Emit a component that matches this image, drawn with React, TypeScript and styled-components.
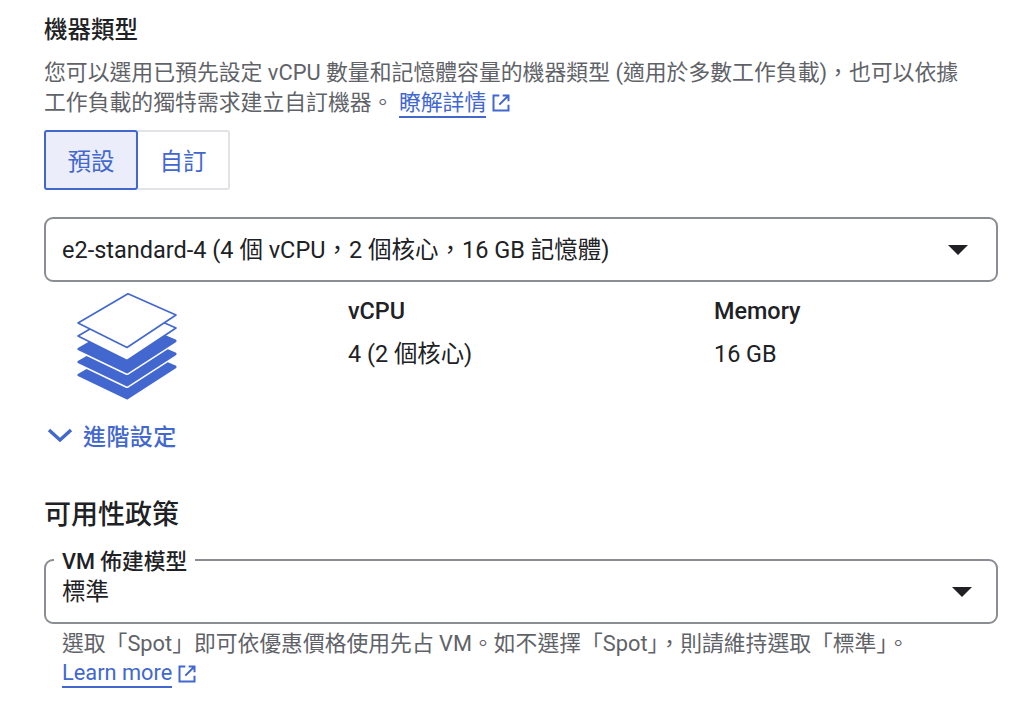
import React from "react";
import styled, { createGlobalStyle } from "styled-components";

const FONT = `Roboto, "Noto Sans CJK TC", sans-serif`;
const BLUE = "#4267cf";

const GlobalStyle = createGlobalStyle`
  html, body {
    margin: 0;
    padding: 0;
    background: #fff;
    font-family: ${FONT};
  }
`;

const Page = styled.div`
  width: 1024px;
  height: 724px;
  overflow: hidden;
  box-sizing: border-box;
  padding: 14px 26px 0 44px;
  color: #202124;
`;

const Label = styled.div`
  font-size: 23.5px;
  line-height: 32px;
  font-weight: 500;
`;

const Desc = styled.div`
  margin-top: 12px;
  font-size: 21.85px;
  line-height: 30px;
  color: #5f6368;
`;

const DescLine = styled.div`
  display: flex;
  align-items: center;
  white-space: pre;
`;

const TextLink = styled.a`
  color: ${BLUE};
  border-bottom: 2px solid ${BLUE};
  line-height: 27px;
  text-decoration: none;
`;

const ExternalSvg = styled.svg`
  width: 20px;
  height: 20px;
  margin-left: 5px;
  flex: none;
`;

const ExternalIcon = () => (
  <ExternalSvg viewBox="0 0 24 24" fill="none" stroke={BLUE} strokeWidth="2.4">
    <path d="M10 3H3v18h18v-7" />
    <path d="M14 3h7v7M21 3 10 14" />
  </ExternalSvg>
);

const Toggle = styled.div`
  display: flex;
  margin-top: 12px;
  width: 186px;
  height: 60px;
`;

const ToggleButton = styled.button<{ $active?: boolean }>`
  flex: ${({ $active }) => ($active ? "0 0 94px" : "1")};
  font-family: ${FONT};
  font-size: 23.5px;
  padding: 0;
  color: ${BLUE};
  background: ${({ $active }) => ($active ? "#ebeefa" : "#fff")};
  border: ${({ $active }) => ($active ? `2px solid ${BLUE}` : "2px solid #e2e3e6")};
  border-left: ${({ $active }) => ($active ? `2px solid ${BLUE}` : "none")};
  border-radius: ${({ $active }) => ($active ? "3px" : "0 3px 3px 0")};
`;

const Select = styled.div<{ $top: number; $center?: boolean }>`
  position: relative;
  display: flex;
  align-items: ${({ $center }) => ($center ? "center" : "flex-start")};
  justify-content: space-between;
  box-sizing: border-box;
  height: 65px;
  margin-top: ${({ $top }) => $top}px;
  padding: ${({ $center }) => ($center ? "0 28px 0 16px" : "16px 24px 0 16px")};
  border: 2px solid #8a8d91;
  border-radius: 9px;
  font-size: 23.5px;
  line-height: 30px;
`;

const Arrow = styled.span<{ $down?: number }>`
  width: 0;
  height: 0;
  border-left: 10px solid transparent;
  border-right: 10px solid transparent;
  border-top: 10px solid #202124;
  margin-top: ${({ $down }) => $down ?? 0}px;
`;

const Specs = styled.div`
  display: grid;
  grid-template-columns: 304px 366px 1fr;
  height: 137px;
  padding-top: 8px;
  box-sizing: border-box;
`;

const StackIcon = styled.svg`
  width: 102px;
  height: 110px;
  margin: 3px 0 0 33px;
`;

const SpecColumn = styled.div`
  font-size: 23.4px;
  line-height: 30px;
  padding-top: 6px;
`;

const SpecName = styled.div`
  font-weight: 500;
  margin-bottom: 13px;
`;

const Advanced = styled.div`
  display: flex;
  align-items: center;
  gap: 10px;
  height: 32px;
  padding-left: 3px;
  font-size: 23px;
  font-weight: 500;
  color: ${BLUE};
  letter-spacing: 0.4px;
`;

const Heading = styled.h2`
  margin: 46px 0 0;
  font-size: 27px;
  line-height: 36px;
  font-weight: 500;
`;

const Legend = styled.span`
  position: absolute;
  top: -13px;
  left: 8px;
  padding: 0 8px;
  background: #fff;
  font-size: 21.7px;
  line-height: 28px;
  font-weight: 500;
`;

const Hint = styled.div`
  margin: 5px 0 0 18px;
  font-size: 21.8px;
  line-height: 30px;
  color: #5f6368;
`;

const SOLID_LAYER = "M2 30 51 2 98 22 50 53Z";
const OUTLINE_LAYER = "M1 30 51 .8 99 22 50 54.500Z";

const Stack = () => (
  <StackIcon viewBox="0 0 102 110">
    {[52, 39, 26].map((dy) => (
      <g key={dy} transform={`translate(0 ${dy})`}>
        <path d={SOLID_LAYER} fill="#fff" stroke="#fff" strokeWidth="6" strokeLinejoin="round" />
        <path d={SOLID_LAYER} fill={BLUE} stroke={BLUE} strokeWidth="3" strokeLinejoin="round" />
      </g>
    ))}
    {[13, 0].map((dy) => (
      <path
        key={dy}
        transform={`translate(0 ${dy})`}
        d={OUTLINE_LAYER}
        fill="#fff"
        stroke={BLUE}
        strokeWidth="1.6"
        strokeLinejoin="round"
      />
    ))}
  </StackIcon>
);

export default function App() {
  return (
    <Page>
      <GlobalStyle />
      <Label>機器類型</Label>
      <Desc>
        <DescLine>您可以選用已預先設定 vCPU 數量和記憶體容量的機器類型 (適用於多數工作負載)，也可以依據</DescLine>
        <DescLine>
          <span>工作負載的獨特需求建立自訂機器。 </span>
          <TextLink href="#">瞭解詳情</TextLink>
          <ExternalIcon />
        </DescLine>
      </Desc>
      <Toggle>
        <ToggleButton $active>預設</ToggleButton>
        <ToggleButton>自訂</ToggleButton>
      </Toggle>
      <Select $top={27} $center>
        <span>e2-standard-4 (4 個 vCPU，2 個核心，16 GB 記憶體)</span>
        <Arrow />
      </Select>
      <Specs>
        <Stack />
        <SpecColumn>
          <SpecName>vCPU</SpecName>
          4 (2 個核心)
        </SpecColumn>
        <SpecColumn>
          <SpecName>Memory</SpecName>
          16 GB
        </SpecColumn>
      </Specs>
      <Advanced>
        <svg width="26" height="16" viewBox="0 0 26 16" fill="none" stroke={BLUE} strokeWidth="3.4">
          <path d="M2 3l11 10L24 3" />
        </svg>
        進階設定
      </Advanced>
      <Heading>可用性政策</Heading>
      <Select $top={26}>
        <Legend>VM 佈建模型</Legend>
        <span>標準</span>
        <Arrow $down={10} />
      </Select>
      <Hint>
        <DescLine>選取「Spot」即可依優惠價格使用先占 VM。如不選擇「Spot」，則請維持選取「標準」。</DescLine>
        <DescLine>
          <TextLink href="#">Learn more</TextLink>
          <ExternalIcon />
        </DescLine>
      </Hint>
    </Page>
  );
}
